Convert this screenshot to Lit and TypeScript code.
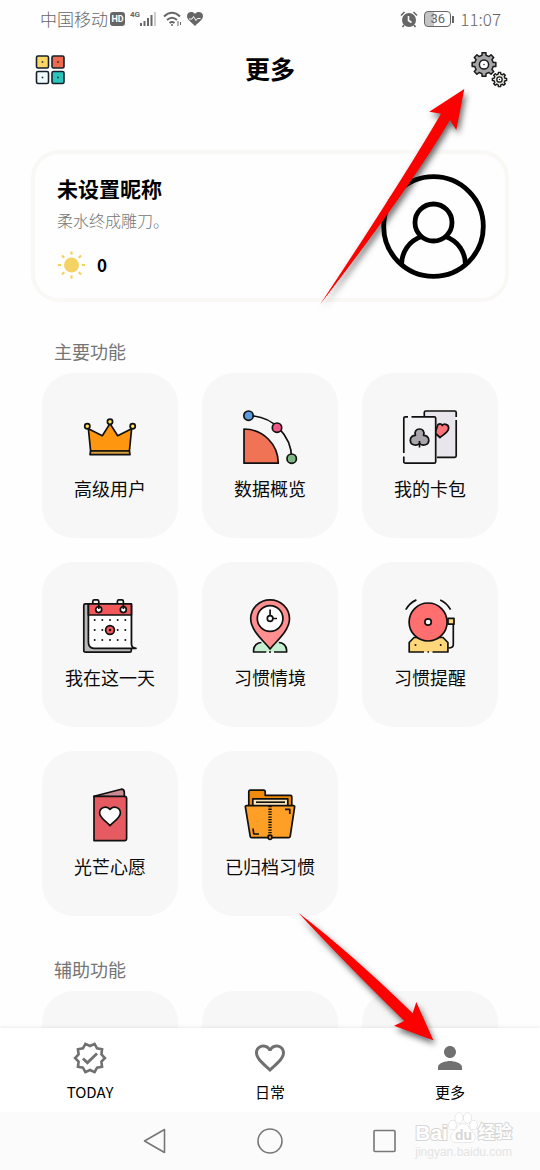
import { LitElement, html, css, svg, TemplateResult } from "lit";
import { customElement, property } from "lit/decorators.js";

/** Closed outline alternating between two radii; used for gears. */
function gearPath(cx: number, cy: number, outer: number, inner: number, teeth: number): string {
  const pts: string[] = [];
  const step = (Math.PI * 2) / teeth;
  for (let i = 0; i < teeth; i++) {
    const a = i * step - Math.PI / 2;
    const corners: [number, number][] = [
      [-0.29, inner],
      [-0.2, outer],
      [0.2, outer],
      [0.29, inner],
    ];
    for (const [f, r] of corners) {
      const t = a + f * step;
      pts.push(`${(cx + r * Math.cos(t)).toFixed(2)} ${(cy + r * Math.sin(t)).toFixed(2)}`);
    }
  }
  return `M${pts.join("L")}Z`;
}

/** Star outline with its first point facing right; used for the badge. */
function starPath(cx: number, cy: number, outer: number, inner: number, points: number): string {
  const pts: string[] = [];
  for (let i = 0; i < points * 2; i++) {
    const r = i % 2 ? inner : outer;
    const t = (i * Math.PI) / points;
    pts.push(`${(cx + r * Math.cos(t)).toFixed(2)} ${(cy + r * Math.sin(t)).toFixed(2)}`);
  }
  return `M${pts.join("L")}Z`;
}

const dots = [21, 31, 41].flatMap((y) => [11.7, 19.3, 27, 34.7, 42.3].map((x) => [x, y]));

const tileIcons: Record<string, TemplateResult> = {
  crown: svg`
    <path d="M5.4 18.8L19.3 25.7L27 13.6L34.7 25.7L48.6 18.8L46.4 41H7.6Z" fill="#ff960f"/>
    <path d="M7.6 41H46.4L47 44.6H7Z" fill="#d99c3c"/>
    <circle cx="4.3" cy="16.3" r="2.6" fill="#ffe35a"/>
    <circle cx="27" cy="11.7" r="2.6" fill="#ffe35a"/>
    <circle cx="49.7" cy="16.3" r="2.6" fill="#ffe35a"/>`,
  chart: svg`
    <path d="M5.5 5.7A43.2 43.2 0 0 1 48.7 48.7" fill="none"/>
    <path d="M1 19A34.3 34.3 0 0 1 35.3 53.2H1Z" fill="#f07355"/>
    <circle cx="5.5" cy="5.7" r="4.7" fill="#5b9be0"/>
    <circle cx="34" cy="17.7" r="4.7" fill="#ef5686"/>
    <circle cx="48.7" cy="48.7" r="4.7" fill="#7db884"/>`,
  cards: svg`
    <rect x="21.3" y="1" width="31.9" height="46.3" rx="1.5" fill="#e8e6ec" stroke="none"/>
    <path d="M35 14.5C38 13 39.5 15 39.2 15.6C41 13 46.5 14.5 45.5 19C44.8 22.5 40 25 37 27.5L32 23Z" fill="#ff737b"/>
    <path d="M21.3 6V2.5A1.5 1.5 0 0 1 22.8 1H51.7A1.5 1.5 0 0 1 53.2 2.5V7M53.2 10V45.8A1.5 1.5 0 0 1 51.7 47.3H34" fill="none"/>
    <rect x="0.8" y="6.8" width="31.9" height="46.4" rx="1.5" fill="#f3f2f4" stroke="none"/>
    <path d="M5 6.8H2.3A1.5 1.5 0 0 0 .8 8.3V43M.8 46.5V51.7A1.5 1.5 0 0 0 2.3 53.2H31.2A1.5 1.5 0 0 0 32.7 51.7V8.3A1.5 1.5 0 0 0 31.2 6.8H8.5" fill="none"/>
    <path d="M16.5 33.5C13 36.8 7.2 34.8 7.3 30.2C7.3 27 10 25.2 12.5 25.3C11 21.5 13.4 19 16.5 19S22 21.5 20.5 25.3C23 25.2 25.8 27 25.8 30.2C25.8 34.8 20 36.8 16.5 33.5Z" fill="#aaa5ad"/>
    <path d="M16.5 31V37.5" fill="none"/>`,
  calendar: svg`
    <rect x="0.8" y="4.8" width="47.5" height="48.4" rx="1.5" fill="#b9b9b9"/>
    <path d="M5.4 5H48.4V45C48.4 47.5 50 49 53 49.3H11C7.5 49.3 5.4 47 5.4 43Z" fill="#fff"/>
    <path d="M5.4 5H48.4V16H5.4Z" fill="#f2575a"/>
    <circle cx="15.7" cy="10.6" r="3" fill="#fff"/>
    <circle cx="40.3" cy="10.6" r="3" fill="#fff"/>
    <path d="M9.8 5V2.3A1.5 1.5 0 0 1 11.3 .9H14.3A1.5 1.5 0 0 1 15.8 2.3V10M34.4 5V2.3A1.5 1.5 0 0 1 35.9 .9H38.9A1.5 1.5 0 0 1 40.4 2.3V10" fill="none"/>
    ${dots.map(([x, y]) => svg`<circle cx=${x} cy=${y} r="1" fill="#111" stroke="none"/>`)}
    <circle cx="27" cy="31" r="4.4" fill="#f2575a"/>
    <circle cx="27" cy="31" r="1.2" fill="#111" stroke="none"/>`,
  pin: svg`
    <path d="M10.6 53V51A7.8 7.8 0 0 1 18.4 43.5H35.8A7.8 7.8 0 0 1 43.6 51V53Z" fill="#c6eed0" stroke="none"/>
    <path d="M23.3 53H10.6V51A7.8 7.8 0 0 1 18.4 43.5M35.8 43.5A7.8 7.8 0 0 1 43.6 51V53H31M26 53H28" fill="none"/>
    <path d="M27.1 50C22 43 7.7 32 7.7 19.8A19.4 19 0 0 1 46.5 19.8C46.5 32 32.2 43 27.1 50Z" fill="#ff908f"/>
    <circle cx="27.1" cy="19.5" r="12.8" fill="#fff"/>
    <circle cx="27.1" cy="19.5" r="2.8" fill="#fff"/>
    <path d="M27.1 10.5V16.5M30 19.5H34" fill="none"/>`,
  bell: svg`
    <path d="M45 19.4H51V25.2H45Z" fill="#ffd67a"/>
    <path d="M50.3 25.3V45.5Q50.3 49 45.5 49" fill="none"/>
    <path d="M6.2 53V43.5L11 38.5H40L44.9 43.5V53Z" fill="#ffd67a" stroke="none"/>
    <path d="M21 53H6.2V43.5L11 38.5H40L44.9 43.5V53H29.5M24.5 53H26" fill="none"/>
    <circle cx="12.5" cy="46" r="1" fill="#111" stroke="none"/>
    <circle cx="37.7" cy="46" r="1" fill="#111" stroke="none"/>
    <circle cx="25.1" cy="23" r="19" fill="#ff6f70"/>
    <circle cx="25.1" cy="23" r="3.2" fill="#fff"/>
    <path d="M2.8 10.7Q6.500 4 13.400 .9M37.200 .9Q44 4 47.600 10.700" fill="none"/>`,
  wish: svg`
    <path d="M11 8.3L38.2 1.2Q41.3 1.2 41.3 4.5V9Z" fill="#c98a92"/>
    <path d="M11 8.3H41.5Q43.6 8.3 43.6 10.5V50.5Q43.6 52.6 41.5 52.6H11Z" fill="#e65b62"/>
    <path d="M27 37.6C22 32.5 16.6 29.6 16.6 25C16.6 19.5 23.5 17 27 21.4C30.5 17 37.4 19.5 37.4 25C37.4 29.6 32 32.5 27 37.6Z" fill="#fff"/>`,
  folder: svg`
    <path d="M5.8 18V3.6Q5.8 2.2 7.2 2.2H20.6Q22.2 2.2 22.2 4V7.3H47.4Q48.8 7.3 48.8 8.7V18Z" fill="#f28a0c"/>
    <path d="M9.8 18V10.8H44.8V18Z" fill="#fbe9bd"/>
    <path d="M13 14.2H42" fill="none"/>
    <path d="M2.4 19Q2.2 17.7 3.6 17.7H50.4Q51.8 17.7 51.6 19L47.2 48.3Q47 49.7 45.6 49.7H8.8Q7.4 49.7 7.2 48.3Z" fill="#ff9f25"/>
    <path d="M42 21.3H46.8V26M10 40.5L10.8 46H16" fill="none"/>
    <path d="M27 18V47" fill="none" stroke-width="3.4" stroke-dasharray="1.3 1.3"/>
    <path d="M25.3 47.5H28.7V50.5Q27 52.5 25.3 50.5Z" fill="#ff9f25"/>`,
};

const navIcons: Record<string, TemplateResult> = {
  today: svg`<path d=${starPath(18, 18, 14.9, 12, 10)} fill="none" stroke="#707070" stroke-width="2.6"/>
    <path d="M11 18.4L15.4 22.8L25 13.4" fill="none" stroke="#707070" stroke-width="2.8"/>`,
  daily: svg`<path transform="scale(1.5)" fill="#707070" d="M16.5 3c-1.74 0-3.41.81-4.5 2.09C10.91 3.81 9.24 3 7.5 3 4.42 3 2 5.42 2 8.5c0 3.78 3.4 6.86 8.55 11.54L12 21.35l1.45-1.32C18.6 15.36 22 12.28 22 8.5 22 5.42 19.58 3 16.5 3zm-4.4 15.55l-.1.1-.1-.1C7.14 14.24 4 11.39 4 8.5 4 6.5 5.5 5 7.5 5c1.54 0 3.04.99 3.57 2.36h1.87C13.46 5.99 14.96 5 16.5 5c2 0 3.5 1.5 3.5 3.5 0 2.89-3.14 5.74-7.9 10.05z"/>`,
  more: svg`<path transform="scale(1.5)" fill="#707070" d="M12 12c2.21 0 4-1.79 4-4s-1.79-4-4-4-4 1.79-4 4 1.79 4 4 4zm0 2c-2.67 0-8 1.34-8 4v2h16v-2c0-2.66-5.33-4-8-4z"/>`,
};

@customElement("status-bar")
class StatusBar extends LitElement {
  static styles = css`
    :host {
      display: flex;
      align-items: center;
      justify-content: space-between;
      height: 38px;
      padding: 0 39px 0 40px;
      color: #666;
      font-weight: 300;
      font-size: 17px;
      line-height: 24px;
    }
    .group { display: flex; align-items: center; }
    .left { gap: 2px; }
    .right { gap: 6px; }
    .hd {
      background: #666;
      color: #fff;
      border-radius: 3px;
      width: 15px;
      height: 14px;
      font: 700 9px/14px "Roboto", sans-serif;
      text-align: center;
    }
    .signal { display: flex; align-items: flex-start; margin-left: 3px; }
    .net { font: 700 8px/8px "Roboto", sans-serif; }
    .wifi { margin-left: 4px; }
    .heart { margin-left: 2px; }
    .battery { display: flex; align-items: center; gap: 1px; }
    .cell {
      box-sizing: border-box;
      width: 27px;
      height: 16px;
      border: 1px solid #666;
      border-radius: 4px;
      background: linear-gradient(90deg, #c4c4c4 36%, #fff 36%);
      font: 400 13px/14px "Roboto", sans-serif;
      text-align: center;
    }
    .tip { width: 2px; height: 7px; background: #666; }
  `;
  render() {
    return html`
      <div class="group left">
        <span>中国移动</span>
        <span class="hd">HD</span>
        <span class="signal">
          <span class="net">4G</span>
          <svg width="17" height="16" viewBox="0 0 17 16" fill="#666">
            <path d="M0 12h2v3H0zM3.5 10h2v5h-2zM7 7h2v8H7zM10.500 4h2v11h-2z" />
            <path d="M14 1h2v14h-2z" fill="#ccc" />
          </svg>
        </span>
        <svg class="wifi" width="20" height="16" viewBox="0 0 20 16" fill="none" stroke="#666" stroke-width="2">
          <path d="M1 5.500Q9 -2 17 5.500M4 9Q9 4.500 14 9M6.500 12Q9 10 11.500 12" />
          <circle cx="9" cy="14" r="1" fill="#666" stroke="none" />
          <path d="M15 10v5M17.500 11v3" stroke-width="1" />
        </svg>
        <svg class="heart" width="16" height="14" viewBox="0 0 16 14">
          <path d="M8 14C4 10 0 7.500 0 4C0 0 5.500-1.500 8 2C10.500-1.500 16 0 16 4C16 7.500 12 10 8 14Z" fill="#666" />
          <path d="M2 7h3l1.500-2.500 2.500 4 1.500-2h3" fill="none" stroke="#fff" />
        </svg>
      </div>
      <div class="group right">
        <svg width="18" height="17" viewBox="0 0 18 17">
          <circle cx="9" cy="9" r="7" fill="#666" />
          <path d="M1 4.500L4.500 1M17 4.500L13.500 1M4 14l-1.500 2M14 14l1.500 2" stroke="#666" stroke-width="1.600" />
          <path d="M8.500 5v4.500l3 2" fill="none" stroke="#fff" stroke-width="1.600" />
        </svg>
        <span class="battery"><span class="cell">36</span><span class="tip"></span></span>
        <span>11:07</span>
      </div>
    `;
  }
}

@customElement("feature-tile")
class FeatureTile extends LitElement {
  @property() icon = "";
  @property() label = "";
  static styles = css`
    :host { display: block; }
    .tile {
      display: flex;
      flex-direction: column;
      align-items: center;
      gap: 12px;
      box-sizing: border-box;
      width: 100%;
      height: 165px;
      margin: 0;
      padding: 37px 0 0;
      border: 0;
      border-radius: 32px;
      background: #f7f7f7;
      color: #0a0a0a;
      font: inherit;
      font-size: 18px;
      line-height: 24px;
    }
    .icon { display: block; overflow: visible; }
  `;
  render() {
    if (!this.label) return html`<div class="tile"></div>`;
    return html`<button class="tile" type="button">
      <svg class="icon" width="54" height="54" viewBox="0 0 54 54" stroke="#111" stroke-width="1.700" stroke-linejoin="round">
        ${tileIcons[this.icon]}
      </svg>
      <span>${this.label}</span>
    </button>`;
  }
}

@customElement("app-root")
class AppRoot extends LitElement {
  static styles = css`
    :host {
      display: flex;
      flex-direction: column;
      position: relative;
      height: 100vh;
      overflow: hidden;
      background: #fefefe;
      color: #000;
      font-family: "Noto Sans CJK SC", "Noto Sans", sans-serif;
    }
    .header {
      display: grid;
      grid-template-columns: 1fr auto 1fr;
      align-items: center;
      height: 64px;
      padding: 0 32px;
    }
    .title { margin: 0; padding-bottom: 4px; font-size: 25px; line-height: 32px; font-weight: 700; }
    .plain { padding: 0; border: 0; background: none; display: block; }
    .plain svg { display: block; }
    .end { justify-self: end; }
    .content { flex: 1; min-height: 0; overflow: auto; scrollbar-width: none; }
    .card {
      display: flex;
      align-items: center;
      justify-content: space-between;
      margin: 48px 31px 0;
      padding: 20px 19px 19px 22px;
      border: 4px solid #f9f8f5;
      border-radius: 28px;
    }
    .name { margin: 0; font-size: 21px; line-height: 26px; font-weight: 700; }
    .motto { margin: 7px 0 19px; font-size: 16px; line-height: 24px; color: #757575; font-weight: 300; }
    .score { display: flex; align-items: center; gap: 12px; font-size: 17px; line-height: 28px; font-weight: 700; }
    .section { padding: 0 42px; }
    .heading { margin: 37px 0 10px 12px; font-size: 18px; line-height: 24px; font-weight: 400; color: #757575; }
    .second { margin-top: 41px; }
    .grid { display: grid; grid-template-columns: repeat(3, 1fr); gap: 24px; }
    .tabs {
      display: grid;
      grid-template-columns: repeat(3, 1fr);
      padding: 12px 0 10px;
      background: #fff;
      box-shadow: 0 -1px 3px rgba(0, 0, 0, 0.08);
    }
    .tab {
      display: flex;
      flex-direction: column;
      align-items: center;
      gap: 6px;
      color: #000;
      text-decoration: none;
      font-size: 15px;
      line-height: 20px;
    }
    .system {
      display: grid;
      grid-template-columns: repeat(3, 26px);
      justify-content: center;
      align-items: center;
      gap: 89px;
      height: 58px;
      background: #fbfbfb;
      position: relative;
    }
    .arrow { position: absolute; pointer-events: none; filter: drop-shadow(2px 4px 3px rgba(0, 0, 0, 0.6)); }
    .to-settings { top: 84px; right: 75px; }
    .to-more { bottom: 120px; right: 100px; }
    .mark {
      position: absolute;
      right: 28px;
      bottom: 10px;
      color: #fff;
      pointer-events: none;
      font-family: "Liberation Sans", "Noto Sans CJK SC", sans-serif;
    }
    .brand { display: flex; align-items: flex-end; font-weight: 700; font-size: 21px; line-height: 22px; -webkit-text-stroke: 2px #d6d6d6; paint-order: stroke fill; }
    .paw { display: block; -webkit-text-stroke: 0; }
    .cn { font-size: 17px; }
    .site { font-size: 12px; line-height: 16px; color: #e4e4e4; }
  `;

  private main = [
    ["crown", "高级用户"],
    ["chart", "数据概览"],
    ["cards", "我的卡包"],
    ["calendar", "我在这一天"],
    ["pin", "习惯情境"],
    ["bell", "习惯提醒"],
    ["wish", "光芒心愿"],
    ["folder", "已归档习惯"],
  ];
  private tabs = [
    ["today", "TODAY"],
    ["daily", "日常"],
    ["more", "更多"],
  ];

  render() {
    return html`
      <status-bar></status-bar>
      <header class="header">
        <button class="plain" type="button" aria-label="小组件">
          <svg width="33" height="30" viewBox="-3 0 33 30" stroke="#15202b" stroke-width="1.600">
            <rect x="1.500" y="1" width="12" height="12" rx="1.500" fill="#ffd766" />
            <rect x="17" y="1" width="12" height="12" rx="1.500" fill="#f0694f" />
            <rect x="1.500" y="16.500" width="12" height="12" rx="1.500" fill="#effaff" />
            <rect x="17" y="16.500" width="12" height="12" rx="1.500" fill="#2cc5bd" />
            <path d="M6.700 7h1.600M22.200 7h1.600M6.700 22.500h1.600M22.200 22.500h1.600" />
          </svg>
        </button>
        <h1 class="title">更多</h1>
        <button class="plain end" type="button" aria-label="设置">
          <svg width="37" height="36" viewBox="0 0 37 36" stroke="#1a1a1a" stroke-linejoin="round">
            <path d=${gearPath(13, 12.5, 12, 9.4, 8)} fill="#a5a5a8" stroke-width="1.500" />
            <circle cx="13" cy="12.500" r="4.600" fill="#fff" stroke-width="1.500" />
            <circle cx="13" cy="12.500" r="0.700" fill="#111" stroke="none" />
            <path d=${gearPath(28.5, 27.5, 7.2, 5.6, 8)} fill="#e8e6da" stroke-width="1.400" />
            <circle cx="28.500" cy="27.500" r="2.700" fill="#fff" stroke-width="1.300" />
            <circle cx="28.500" cy="27.500" r="0.700" fill="#111" stroke="none" />
          </svg>
        </button>
      </header>

      <main class="content">
        <section class="card">
          <div>
            <h2 class="name">未设置昵称</h2>
            <p class="motto">柔水终成雕刀。</p>
            <div class="score">
              <svg width="28" height="28" viewBox="0 0 28 28" stroke="#f3d25f" stroke-width="2.200">
                <circle cx="14.500" cy="14" r="7.500" fill="#f5d264" stroke="none" />
                ${[0, 45, 90, 135, 180, 225, 270, 315].map(
                  (a) => svg`<path d="M14.500 .5v3.200" transform=${`rotate(${a} 14.500 14)`}/>`
                )}
              </svg>
              <span>0</span>
            </div>
          </div>
          <svg width="105" height="105" viewBox="0 0 105 105" fill="none" stroke="#000" stroke-width="4.800">
            <circle cx="52.500" cy="52.500" r="49.800" />
            <circle cx="52.500" cy="48.500" r="18.500" />
            <path d="M20.500 91C20.500 78 28 67 40.500 62.500M84.500 91C84.500 78 77 67 64.500 62.500" />
          </svg>
        </section>

        <section class="section">
          <h2 class="heading">主要功能</h2>
          <div class="grid">
            ${this.main.map(([icon, label]) => html`<feature-tile icon=${icon} label=${label}></feature-tile>`)}
          </div>
          <h2 class="heading second">辅助功能</h2>
          <div class="grid">
            <feature-tile></feature-tile>
            <feature-tile></feature-tile>
            <feature-tile></feature-tile>
          </div>
        </section>
      </main>

      <nav class="tabs">
        ${this.tabs.map(
          ([icon, label]) => html`<a class="tab" href="#${icon}">
            <svg width="36" height="36" viewBox="0 0 36 36">${navIcons[icon]}</svg>
            <span>${label}</span>
          </a>`
        )}
      </nav>

      <footer class="system">
        <button class="plain" type="button" aria-label="返回">
          <svg width="26" height="26" viewBox="0 0 26 26" fill="none" stroke="#777" stroke-width="1.600" stroke-linejoin="round">
            <path d="M22.500 1.500V24.500L2.500 13Z" />
          </svg>
        </button>
        <button class="plain" type="button" aria-label="主页">
          <svg width="26" height="26" viewBox="0 0 26 26" fill="none" stroke="#777" stroke-width="1.600">
            <circle cx="13" cy="13" r="12" />
          </svg>
        </button>
        <button class="plain" type="button" aria-label="最近">
          <svg width="26" height="26" viewBox="0 0 26 26" fill="none" stroke="#777" stroke-width="1.600">
            <rect x="2" y="2.500" width="21" height="21" rx="1" />
          </svg>
        </button>
        <div class="mark">
          <div class="brand">
            <span>Bai</span>
            <svg class="paw" width="30" height="32" viewBox="0 0 30 32" fill="#fff" stroke="#d6d6d6">
              <ellipse cx="4.500" cy="13" rx="3.500" ry="4.500" />
              <ellipse cx="11" cy="6" rx="3.800" ry="5" />
              <ellipse cx="19.500" cy="6" rx="3.800" ry="5" />
              <ellipse cx="25.500" cy="13" rx="3.500" ry="4.500" />
              <path d="M15 12C10 12 9 17 5.500 20C1 24 3 31 9 30.500C13 30 17 30 21 30.500C27 31 29 24 24.500 20C21 17 20 12 15 12Z" />
              <text x="7" y="28" font-size="14" stroke="none" fill="#d6d6d6">du</text>
            </svg>
            <span class="cn">经验</span>
          </div>
          <div class="site">jingyan.baidu.com</div>
        </div>
      </footer>

      <svg class="arrow to-settings" width="150" height="225" viewBox="315 84 150 225">
        <path d="M464.300 89L429.300 111.700L441 113.700Q400 184 320 304.500Q410 188 450 120L456.300 130Z" fill="#fd0000" />
      </svg>
      <svg class="arrow to-more" width="145" height="140" viewBox="295 910 145 140">
        <path d="M433.300 1040.300L416.300 1002L412.700 1013.300Q352 954 298.300 912.700Q342 960 404.300 1021L394 1025.700Z" fill="#fd0000" />
      </svg>
    `;
  }
}
